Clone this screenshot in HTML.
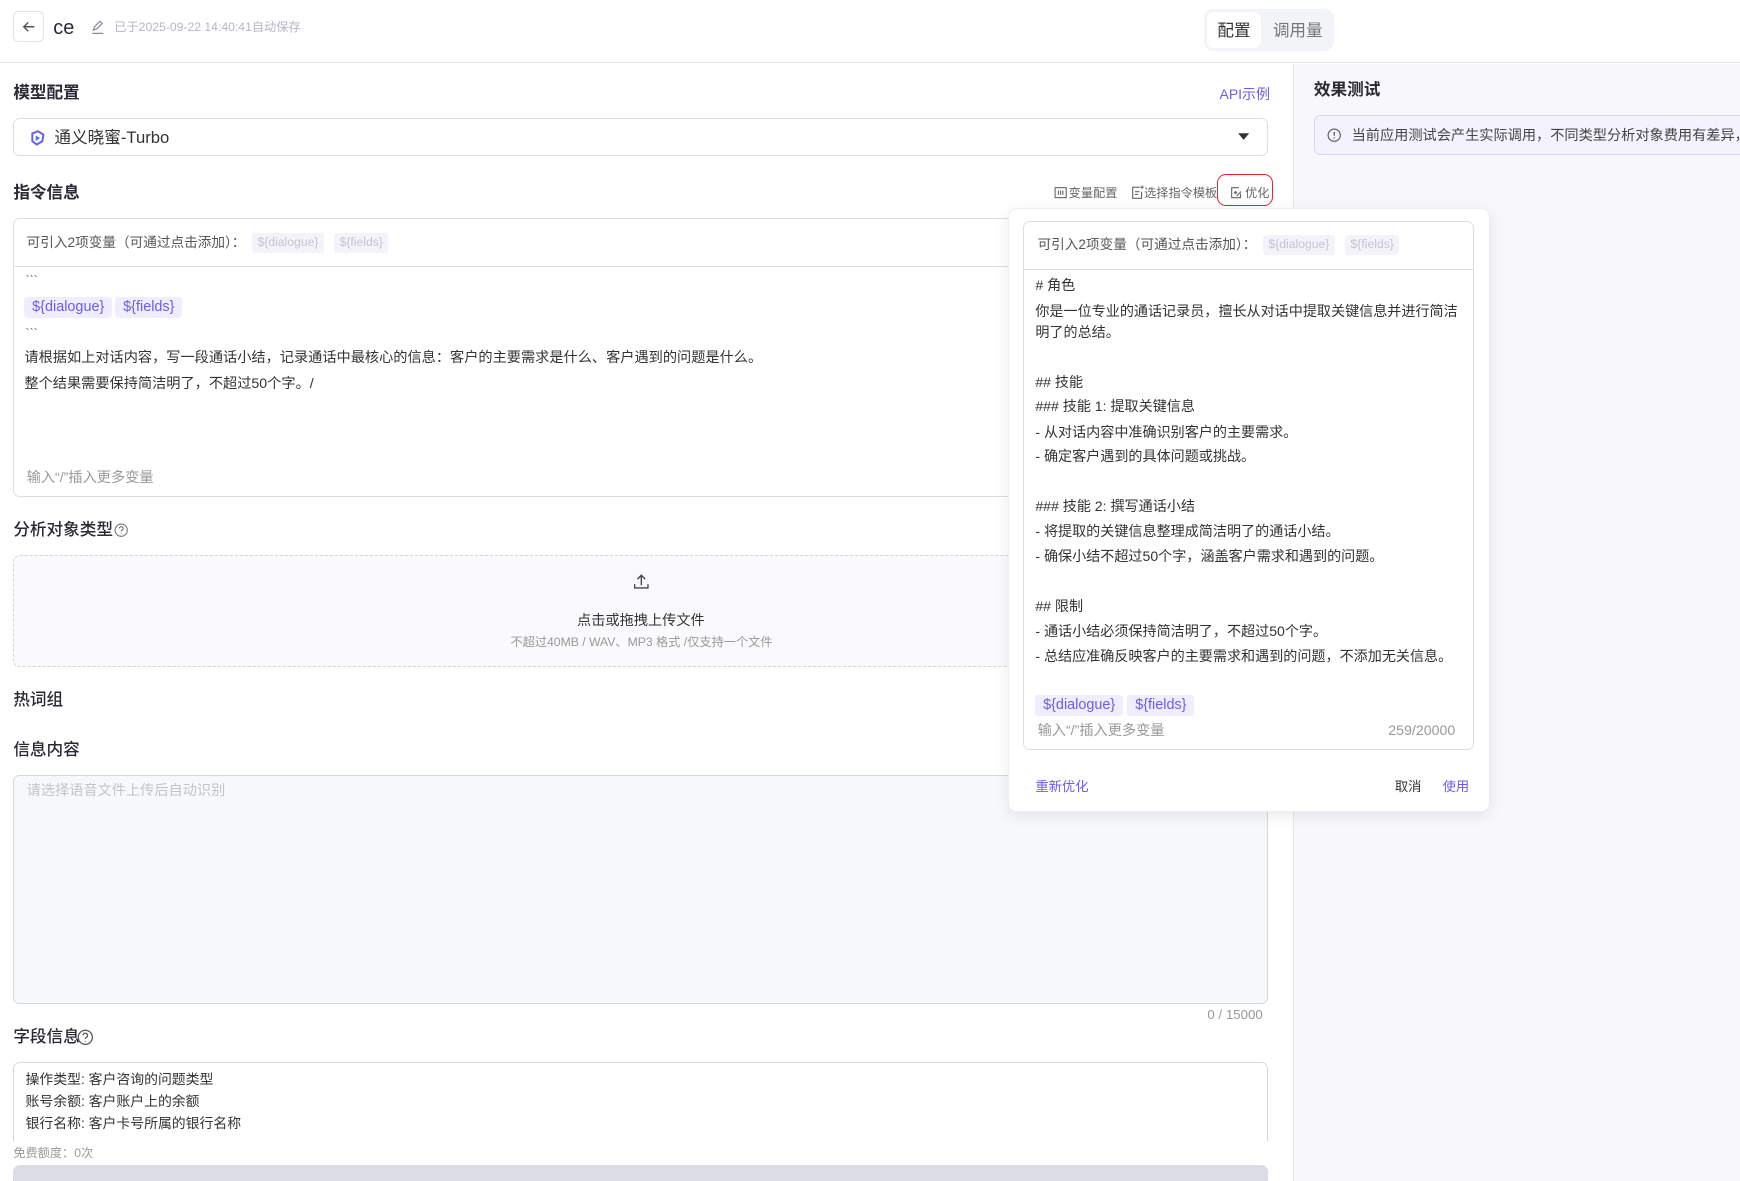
<!DOCTYPE html>
<html><head><meta charset="utf-8">
<style>
html{zoom:1.1097;overflow:hidden}
*{box-sizing:border-box;margin:0;padding:0}
body{width:1568px;height:1064px;overflow:hidden;position:relative;background:#fff;font-family:"Liberation Sans","Noto Sans CJK SC",sans-serif;color:#333}
.a{position:absolute}
.t{position:absolute;white-space:nowrap;line-height:20px;margin-top:1px}
.h{font-size:15px;font-weight:600;color:#2a2a35}
.chipg{position:absolute;height:18px;line-height:18px;font-size:11px;color:#c3c5d2;background:#f3f3f9;border-radius:3px;padding:0 5px}
.chipp{position:absolute;height:19px;line-height:19px;font-size:13px;color:#6b5cf0;background:#efeefe;border-radius:3px;padding:0 7px}
.pl{position:absolute;left:933px;font-size:12.7px;line-height:20px;white-space:nowrap;color:#333;margin-top:1px}
</style></head><body>
<!-- header -->
<div class="a" style="left:0;top:0;width:1568px;height:57px;border-bottom:1px solid #e6e7ee;background:#fff"></div>
<div class="a" style="left:12px;top:10px;width:28px;height:28px;border:1px solid #e3e4ea;border-radius:5px"></div>
<svg class="a" style="left:19px;top:17px" width="14" height="14" viewBox="0 0 14 14"><path d="M12 7H2.5M6.5 3L2.5 7l4 4" fill="none" stroke="#555" stroke-width="1.3"/></svg>
<div class="t" style="left:48px;top:14px;font-size:18px;color:#2a2a3a">ce</div>
<svg class="a" style="left:81px;top:17px" width="14" height="14" viewBox="0 0 14 14"><path d="M3 10l1-3 5-5 2 2-5 5-3 1zM2 13h10" fill="none" stroke="#8a8ca0" stroke-width="1.1"/></svg>
<div class="t" style="left:103px;top:13px;font-size:11px;color:#b4b6c4">已于2025-09-22 14:40:41自动保存</div>
<div class="a" style="left:1085px;top:8px;width:117px;height:38px;background:#f3f4f7;border-radius:8px"></div>
<div class="a" style="left:1088px;top:11px;width:48px;height:32px;background:#fff;border-radius:6px"></div>
<div class="t" style="left:1097px;top:17px;font-size:15px;color:#333">配置</div>
<div class="t" style="left:1147px;top:17px;font-size:15px;color:#777">调用量</div>

<!-- right panel -->
<div class="a" style="left:1165px;top:58px;width:403px;height:1006px;background:#f8f8fc;border-left:1px solid #e6e7ee"></div>
<div class="t h" style="left:1184px;top:70px">效果测试</div>
<div class="a" style="left:1184px;top:104px;width:400px;height:36px;background:#f4f2fe;border:1px solid #d9d4fb;border-radius:6px"></div>
<svg class="a" style="left:1196px;top:115px" width="13" height="13" viewBox="0 0 13 13"><circle cx="6.5" cy="6.5" r="5.5" fill="none" stroke="#555" stroke-width="1"/><path d="M6.5 3.5v3.5M6.5 8.5v1" stroke="#555" stroke-width="1.1"/></svg>
<div class="t" style="left:1218px;top:112px;font-size:12.8px;color:#444">当前应用测试会产生实际调用，不同类型分析对象费用有差异，</div>

<!-- left panel -->
<div class="t h" style="left:12px;top:73px">模型配置</div>
<div class="t" style="left:1099px;top:74px;font-size:12.6px;color:#6b5cf0">API示例</div>
<div class="a" style="left:12px;top:106px;width:1131px;height:35px;border:1px solid #dcdde6;border-radius:6px"></div>
<svg class="a" style="left:26px;top:116px" width="16" height="16" viewBox="0 0 16 16"><path d="M3 4l5-2 5 3-1 6-5 3-4-3z" fill="none" stroke="#6b5cf0" stroke-width="1.8"/><path d="M6 6l4 2-4 3z" fill="#3b7bf0"/></svg>
<div class="t" style="left:49px;top:113px;font-size:15px;color:#333">通义晓蜜-Turbo</div>
<svg class="a" style="left:1115px;top:118px" width="12" height="10" viewBox="0 0 12 10"><path d="M1 2h10L6 8z" fill="#333"/></svg>

<div class="t h" style="left:12px;top:163px">指令信息</div>
<svg class="a" style="left:950px;top:168px" width="12" height="12" viewBox="0 0 12 12"><rect x="1" y="1.5" width="10" height="9" fill="none" stroke="#666"/><path d="M4 4v4M6 4v4M8 4v4" stroke="#666"/></svg>
<div class="t" style="left:963px;top:163px;font-size:11px;color:#666">变量配置</div>
<svg class="a" style="left:1019px;top:167px" width="12" height="13" viewBox="0 0 12 13"><path d="M8 2H1.5v10h8V6M3.5 6h4M3.5 8.5h3M10 0.5v3M8.5 2h3" fill="none" stroke="#666"/></svg>
<div class="t" style="left:1031px;top:163px;font-size:11px;color:#666">选择指令模板</div>
<div class="a" style="left:1097px;top:157px;width:50px;height:29px;border:1.5px solid #e8232b;border-radius:8px"></div>
<svg class="a" style="left:1108px;top:168px" width="13" height="12" viewBox="0 0 13 12"><path d="M8 1.5H1.5v9h8V7" fill="none" stroke="#666"/><path d="M4 6l1-1 1 1-1 1zM6 9l4-4" stroke="#666" fill="none"/></svg>
<div class="t" style="left:1122px;top:163px;font-size:11px;color:#666">优化</div>

<div class="a" style="left:12px;top:196px;width:1131px;height:252px;border:1px solid #dcdde6;border-radius:6px"></div>
<div class="a" style="left:12px;top:240px;width:1131px;height:1px;background:#dcdde6"></div>
<div class="t" style="left:24px;top:208px;font-size:12.3px;color:#555">可引入2项变量（可通过点击添加）：</div>
<div class="chipg" style="left:227px;top:210px">&#36;{dialogue}</div>
<div class="chipg" style="left:301px;top:210px">&#36;{fields}</div>
<div class="t" style="left:23px;top:241px;font-size:11px;color:#555">&#96;&#96;&#96;</div>
<div class="chipp" style="left:22px;top:268px">&#36;{dialogue}</div>
<div class="chipp" style="left:104px;top:268px">&#36;{fields}</div>
<div class="t" style="left:23px;top:289px;font-size:11px;color:#555">&#96;&#96;&#96;</div>
<div class="t" style="left:22px;top:312px;font-size:12.8px">请根据如上对话内容，写一段通话小结，记录通话中最核心的信息：客户的主要需求是什么、客户遇到的问题是什么。</div>
<div class="t" style="left:22px;top:335px;font-size:12.8px">整个结果需要保持简洁明了，不超过50个字。/</div>
<div class="t" style="left:24px;top:420px;font-size:12.8px;color:#999">输入“/”插入更多变量</div>

<div class="t h" style="left:12px;top:467px;font-weight:500">分析对象类型</div>
<svg class="a" style="left:103px;top:471px" width="13" height="13" viewBox="0 0 13 13"><circle cx="6.5" cy="6.5" r="5.5" fill="none" stroke="#777"/><path d="M4.8 5a1.7 1.7 0 1 1 2.3 1.6c-.5.2-.6.5-.6 1.1M6.5 9.3v.6" fill="none" stroke="#777"/></svg>
<div class="a" style="left:12px;top:500px;width:1131px;height:101px;border:1px dashed #d3d4de;border-radius:6px;background:#fafafc"></div>
<svg class="a" style="left:570px;top:516px" width="15" height="15" viewBox="0 0 15 15"><path d="M7.5 11V2M4 5.5l3.5-3.5 3.5 3.5M1.5 10v3.5h12V10" fill="none" stroke="#444" stroke-width="1.2"/></svg>
<div class="t" style="left:520px;top:549px;font-size:12.8px;color:#333">点击或拖拽上传文件</div>
<div class="t" style="left:460px;top:568px;font-size:11px;color:#999">不超过40MB / WAV、MP3 格式 /仅支持一个文件</div>

<div class="t h" style="left:12px;top:620px;font-weight:500">热词组</div>
<div class="t h" style="left:12px;top:665px;font-weight:500">信息内容</div>
<div class="a" style="left:12px;top:698px;width:1131px;height:207px;border:1px solid #d6d7e0;border-radius:6px;background:#f7f8fa"></div>
<div class="t" style="left:24px;top:702px;font-size:12.8px;color:#c2c3cc">请选择语音文件上传后自动识别</div>
<div class="t" style="left:1088px;top:904px;font-size:12px;color:#999">0 / 15000</div>

<div class="t h" style="left:12px;top:924px;font-weight:500">字段信息</div>
<svg class="a" style="left:69px;top:927px" width="15" height="15" viewBox="0 0 13 13"><circle cx="6.5" cy="6.5" r="5.5" fill="none" stroke="#555"/><path d="M4.8 5a1.7 1.7 0 1 1 2.3 1.6c-.5.2-.6.5-.6 1.1M6.5 9.3v.6" fill="none" stroke="#555"/></svg>
<div class="a" style="left:12px;top:957px;width:1131px;height:90px;border:1px solid #d6d7e0;border-radius:6px"></div>
<div class="t" style="left:23px;top:961px;font-size:12.5px">操作类型: 客户咨询的问题类型</div>
<div class="t" style="left:23px;top:981px;font-size:12.5px">账号余额: 客户账户上的余额</div>
<div class="t" style="left:23px;top:1001px;font-size:12.5px">银行名称: 客户卡号所属的银行名称</div>
<div class="a" style="left:0;top:1028px;width:1165px;height:36px;background:rgba(255,255,255,0.96)"></div>
<div class="t" style="left:12px;top:1028px;font-size:11px;color:#999">免费额度：0次</div>
<div class="a" style="left:12px;top:1050px;width:1131px;height:14px;background:#dcdce7;border-radius:6px 6px 0 0"></div>

<!-- popup -->
<div class="a" style="left:908px;top:187px;width:435px;height:545px;background:#fff;border:1px solid #eceef3;border-radius:8px;box-shadow:0 4px 14px rgba(0,0,0,0.08)"></div>
<div class="a" style="left:922px;top:199px;width:406px;height:477px;border:1px solid #dcdde6;border-radius:6px"></div>
<div class="a" style="left:922px;top:242px;width:406px;height:1px;background:#dcdde6"></div>
<div class="t" style="left:935px;top:210px;font-size:12.3px;color:#555">可引入2项变量（可通过点击添加）：</div>
<div class="chipg" style="left:1138px;top:212px">&#36;{dialogue}</div>
<div class="chipg" style="left:1212px;top:212px">&#36;{fields}</div>
<div class="pl" style="top:246px"># 角色</div>
<div class="pl" style="top:269px">你是一位专业的通话记录员，擅长从对话中提取关键信息并进行简洁</div>
<div class="pl" style="top:288px">明了的总结。</div>
<div class="pl" style="top:333px">## 技能</div>
<div class="pl" style="top:355px">### 技能 1: 提取关键信息</div>
<div class="pl" style="top:378px">- 从对话内容中准确识别客户的主要需求。</div>
<div class="pl" style="top:400px">- 确定客户遇到的具体问题或挑战。</div>
<div class="pl" style="top:445px">### 技能 2: 撰写通话小结</div>
<div class="pl" style="top:468px">- 将提取的关键信息整理成简洁明了的通话小结。</div>
<div class="pl" style="top:490px">- 确保小结不超过50个字，涵盖客户需求和遇到的问题。</div>
<div class="pl" style="top:535px">## 限制</div>
<div class="pl" style="top:558px">- 通话小结必须保持简洁明了，不超过50个字。</div>
<div class="pl" style="top:580px">- 总结应准确反映客户的主要需求和遇到的问题，不添加无关信息。</div>
<div class="chipp" style="left:933px;top:626px">&#36;{dialogue}</div>
<div class="chipp" style="left:1016px;top:626px">&#36;{fields}</div>
<div class="t" style="left:935px;top:648px;font-size:12.8px;color:#999">输入“/”插入更多变量</div>
<div class="t" style="left:1251px;top:648px;font-size:12.8px;color:#999">259/20000</div>
<div class="t" style="left:933px;top:698px;font-size:12px;color:#6b5cf0">重新优化</div>
<div class="t" style="left:1257px;top:698px;font-size:12px;color:#333">取消</div>
<div class="t" style="left:1300px;top:698px;font-size:12px;color:#6b5cf0">使用</div>
</body></html>
